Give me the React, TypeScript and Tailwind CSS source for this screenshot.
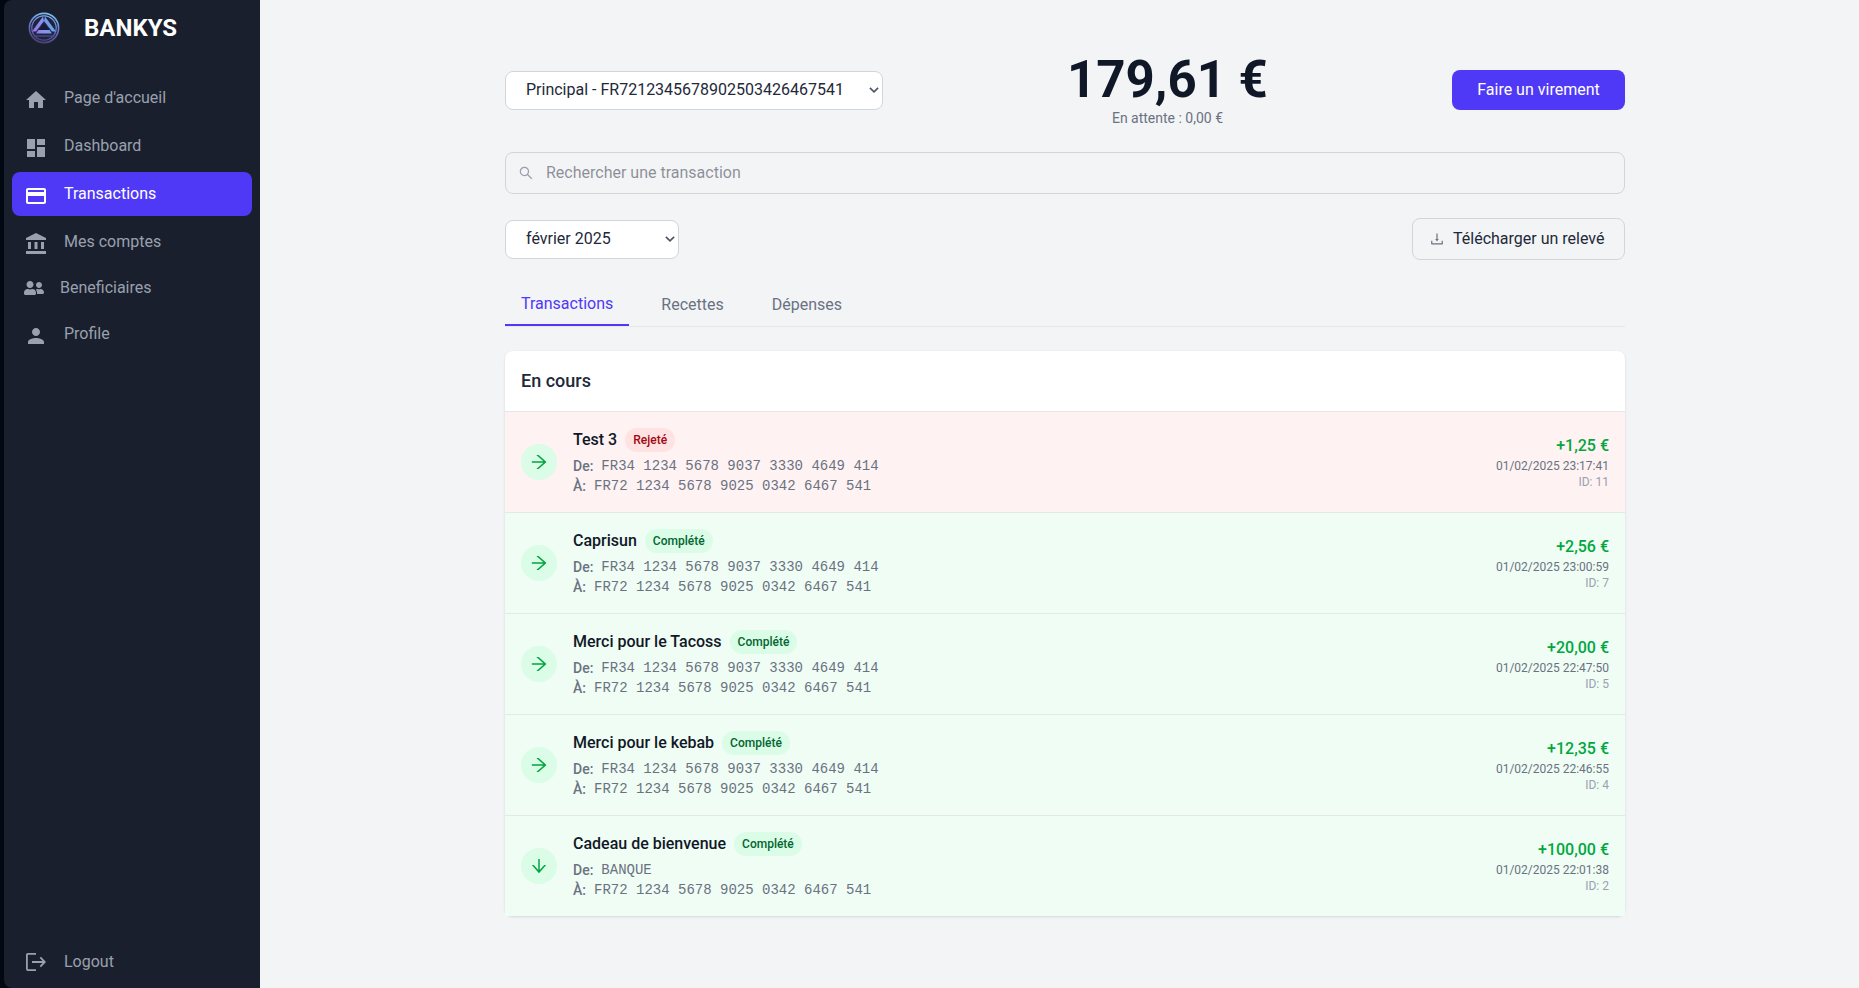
import type { ComponentType } from "react";
import { MdHome, MdDashboard, MdCreditCard, MdAccountBalance, MdPerson } from "react-icons/md";
import { FaUserFriends } from "react-icons/fa";
import { AiOutlineSearch, AiOutlineDownload, AiOutlineArrowRight, AiOutlineArrowDown } from "react-icons/ai";

type IconType = ComponentType<{ className?: string }>;

const nav: { label: string; Icon: IconType; active?: boolean; compact?: boolean }[] = [
  { label: "Page d'accueil", Icon: MdHome },
  { label: "Dashboard", Icon: MdDashboard },
  { label: "Transactions", Icon: MdCreditCard, active: true },
  { label: "Mes comptes", Icon: MdAccountBalance },
  { label: "Beneficiaires", Icon: FaUserFriends, compact: true },
  { label: "Profile", Icon: MdPerson },
];

const MY_IBAN = "FR72 1234 5678 9025 0342 6467 541";
const OTHER_IBAN = "FR34 1234 5678 9037 3330 4649 414";

const transactions = [
  { id: 11, title: "Test 3", rejected: true, from: OTHER_IBAN, amount: "+1,25 €", date: "01/02/2025 23:17:41" },
  { id: 7, title: "Caprisun", from: OTHER_IBAN, amount: "+2,56 €", date: "01/02/2025 23:00:59" },
  { id: 5, title: "Merci pour le Tacoss", from: OTHER_IBAN, amount: "+20,00 €", date: "01/02/2025 22:47:50" },
  { id: 4, title: "Merci pour le kebab", from: OTHER_IBAN, amount: "+12,35 €", date: "01/02/2025 22:46:55" },
  { id: 2, title: "Cadeau de bienvenue", from: "BANQUE", deposit: true, amount: "+100,00 €", date: "01/02/2025 22:01:38" },
];

function Logo() {
  return (
    <svg viewBox="0 0 32 32" className="size-8" fill="none" aria-hidden="true">
      <defs>
        <linearGradient id="ring" x1="20" y1="0" x2="12" y2="32" gradientUnits="userSpaceOnUse">
          <stop stopColor="#7cc4f0" />
          <stop offset="0.5" stopColor="#6673c4" />
          <stop offset="1" stopColor="#4b3a6e" />
        </linearGradient>
        <linearGradient id="tri" x1="4" y1="20" x2="27" y2="12" gradientUnits="userSpaceOnUse">
          <stop stopColor="#9a6fe0" />
          <stop offset="0.5" stopColor="#8793ee" />
          <stop offset="1" stopColor="#5aa9e4" />
        </linearGradient>
      </defs>
      <circle cx="16" cy="16" r="14.6" fill="#20233f" stroke="url(#ring)" strokeWidth="1.6" />
      <circle cx="16" cy="16" r="12.2" stroke="url(#ring)" strokeWidth="1.3" />
      <path d="M15 4.500 4 19.500h4L16 9zM17 4.500l11 15h-4L16 9z" fill="url(#tri)" />
      <path d="m16 10-6.500 8.500h13z" fill="#1a1b38" stroke="#34366a" strokeWidth="0.800" />
      <path d="M10.500 18h11l2.500 3.400h-16z" fill="url(#tri)" />
      <path d="M6 24h20" stroke="#4f5090" strokeWidth="1.200" />
    </svg>
  );
}

function LogoutIcon() {
  return (
    <svg viewBox="0 0 20 20" className="size-5" fill="none" stroke="currentColor" strokeWidth="1.800" aria-hidden="true">
      <path d="M10 1.900H1.900a1 1 0 0 0-1 1v14.200a1 1 0 0 0 1 1H10" />
      <path d="M6 10h13M14.300 5.400l4.500 4.600-4.500 4.600" />
    </svg>
  );
}

function Dropdown({ label, value, width }: { label: string; value: string; width: string }) {
  return (
    <div className={`relative ${width}`}>
      <select
        aria-label={label}
        className="h-[39px] w-full appearance-none rounded-lg border border-gray-300 bg-white px-5"
      >
        <option>{value}</option>
      </select>
      <svg
        viewBox="0 0 10 6"
        className="pointer-events-none absolute inset-y-0 right-1 my-auto h-1.5 w-2.5 text-gray-600"
        fill="none"
        stroke="currentColor"
        strokeWidth="1.600"
        aria-hidden="true"
      >
        <path d="m0.900 0.900 4.100 4 4.100-4" />
      </svg>
    </div>
  );
}

export default function App() {
  return (
    <div className="flex min-h-screen bg-gray-100 font-[Roboto,sans-serif] text-base text-gray-800">
      <aside className="flex w-[260px] shrink-0 bg-gray-950 pl-1">
        <div className="flex grow flex-col rounded-l-lg bg-[#1a1f2d] px-2 text-gray-400">
          <div className="flex h-14 items-center gap-6 pl-4">
            <Logo />
            <span className="text-2xl font-bold text-white">BANKYS</span>
          </div>
          <nav className="mt-5 flex grow flex-col gap-1">
            {nav.map(({ label, Icon, active, compact }) => (
              <a
                key={label}
                href="#"
                className={`flex items-center gap-4 rounded-lg pl-3 ${compact ? "h-10" : "h-11"} ${active ? "bg-[#4f39f6] text-white" : ""}`}
              >
                <Icon className={compact ? "size-5" : "mt-1 size-6"} />
                {label}
              </a>
            ))}
          </nav>
          <button type="button" className="mb-1 flex h-11 items-center gap-[18px] pl-[14px]">
            <LogoutIcon />
            Logout
          </button>
        </div>
      </aside>

      <main className="grow pt-[52px] pl-[11px]">
        <div className="mx-auto flex max-w-[1152px] flex-col px-4">
          <div className="flex items-center justify-between">
            <Dropdown label="Compte" value="Principal - FR7212345678902503426467541" width="w-[378px]" />
            <div className="text-center">
              <p className="text-[51px] leading-14 font-bold text-gray-900">179,61 €</p>
              <p className="text-sm text-gray-500">En attente : 0,00 €</p>
            </div>
            <button type="button" className="h-10 w-[173px] rounded-lg bg-[#4f39f6] text-white">
              Faire un virement
            </button>
          </div>

          <label className="mt-6 flex h-[42px] items-center gap-3 rounded-lg border border-gray-300 pl-3">
            <AiOutlineSearch className="size-4 text-gray-400" />
            <input
              type="search"
              aria-label="Rechercher une transaction"
              placeholder="Rechercher une transaction"
              className="grow bg-transparent outline-none placeholder:text-gray-800/50"
            />
          </label>

          <div className="mt-6 flex items-center justify-between">
            <Dropdown label="Mois" value="février 2025" width="w-[174px]" />
            <button type="button" className="flex h-[42px] w-[213px] items-center gap-2 rounded-lg border border-gray-300 px-4">
              <AiOutlineDownload className="size-4 text-gray-500" />
              Télécharger un relevé
            </button>
          </div>

          <div className="mt-6 flex gap-4 border-b border-gray-200 text-gray-500">
            <button type="button" className="border-b-2 border-[#4f39f6] px-4 py-2 text-[#4f39f6]">Transactions</button>
            <button type="button" className="px-4 py-2">Recettes</button>
            <button type="button" className="px-4 py-2">Dépenses</button>
          </div>

          <section className="mt-6 rounded-lg bg-white shadow-sm">
            <h2 className="p-4 text-lg font-medium">En cours</h2>
            <ul>
              {transactions.map((t) => (
                <li
                  key={t.id}
                  className={`flex items-center gap-4 border-t border-gray-200 p-4 ${t.rejected ? "bg-red-50" : "bg-green-50"}`}
                >
                  <span className="flex size-9 items-center justify-center rounded-full bg-green-100 text-green-600">
                    {t.deposit ? <AiOutlineArrowDown className="size-5" /> : <AiOutlineArrowRight className="size-5" />}
                  </span>
                  <div className="grow text-sm text-gray-500">
                    <div className="mb-1 flex items-center gap-2">
                      <h3 className="text-base font-medium text-gray-900">{t.title}</h3>
                      <span
                        className={`rounded-full px-2 py-1 text-xs font-medium ${t.rejected ? "bg-red-100 text-red-800" : "bg-green-100 text-green-800"}`}
                      >
                        {t.rejected ? "Rejeté" : "Complété"}
                      </span>
                    </div>
                    <p className="flex gap-2">
                      <span className="font-medium">De:</span>
                      <span className="font-['Liberation_Mono',monospace]">{t.from}</span>
                    </p>
                    <p className="flex gap-2">
                      <span className="font-medium">À:</span>
                      <span className="font-['Liberation_Mono',monospace]">{MY_IBAN}</span>
                    </p>
                  </div>
                  <div className="text-right text-xs">
                    <p className="text-base font-medium text-green-600">{t.amount}</p>
                    <p className="text-gray-500">{t.date}</p>
                    <p className="text-gray-400">ID: {t.id}</p>
                  </div>
                </li>
              ))}
            </ul>
          </section>
        </div>
      </main>
    </div>
  );
}
